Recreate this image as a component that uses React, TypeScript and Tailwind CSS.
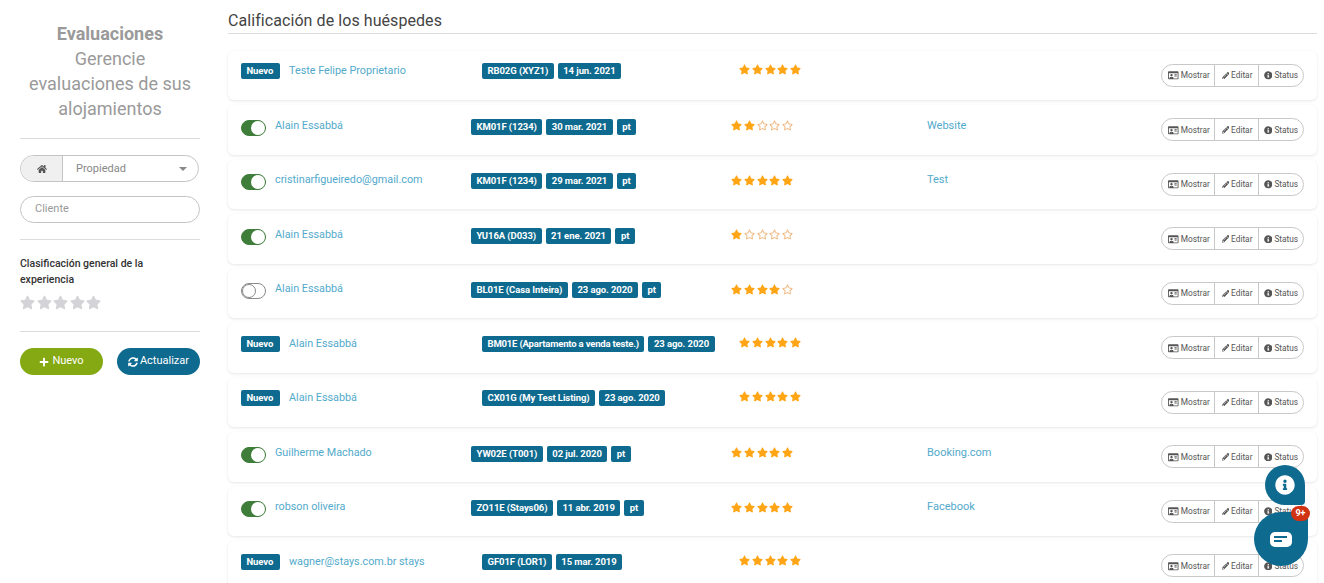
import React from "react";
import { FaHome, FaPlus, FaSyncAlt, FaStar, FaRegStar, FaRegIdCard, FaPencilAlt, FaInfoCircle } from "react-icons/fa";

type Row = { kind: "nuevo" | "on" | "off"; name: string; badges: string[]; stars: number; source?: string };
const rows: Row[] = [
  { kind: "nuevo", name: "Teste Felipe Proprietario", badges: ["RB02G (XYZ1)", "14 jun. 2021"], stars: 5 },
  { kind: "on", name: "Alain Essabbá", badges: ["KM01F (1234)", "30 mar. 2021", "pt"], stars: 2, source: "Website" },
  { kind: "on", name: "cristinarfigueiredo@gmail.com", badges: ["KM01F (1234)", "29 mar. 2021", "pt"], stars: 5, source: "Test" },
  { kind: "on", name: "Alain Essabbá", badges: ["YU16A (D033)", "21 ene. 2021", "pt"], stars: 1 },
  { kind: "off", name: "Alain Essabbá", badges: ["BL01E (Casa Inteira)", "23 ago. 2020", "pt"], stars: 4 },
  { kind: "nuevo", name: "Alain Essabbá", badges: ["BM01E (Apartamento a venda teste.)", "23 ago. 2020"], stars: 5 },
  { kind: "nuevo", name: "Alain Essabbá", badges: ["CX01G (My Test Listing)", "23 ago. 2020"], stars: 5 },
  { kind: "on", name: "Guilherme Machado", badges: ["YW02E (T001)", "02 jul. 2020", "pt"], stars: 5, source: "Booking.com" },
  { kind: "on", name: "robson oliveira", badges: ["ZO11E (Stays06)", "11 abr. 2019", "pt"], stars: 5, source: "Facebook" },
  { kind: "nuevo", name: "wagner@stays.com.br stays", badges: ["GF01F (LOR1)", "15 mar. 2019"], stars: 5 },
];

function Badge({ children, tight }: { children: React.ReactNode; tight?: boolean }) {
  return <span className={`flex h-4 items-center rounded-[2px] bg-[#0f6a8f] px-[5.5px] text-[9.5px] font-bold whitespace-nowrap text-white ${tight ? "tracking-[-0.18px]" : "tracking-[-0.08px]"}`}>{children}</span>;
}

function Toggle({ on }: { on: boolean }) {
  return (
    <span className={`mt-[2px] flex h-4 w-[25px] shrink-0 items-center rounded-full border ${on ? "justify-end border-[#3f7d3a] bg-[#3f7d3a]" : "justify-start border-[#8a8a8a] bg-white"}`}>
      <span className={`h-[14px] w-[14px] rounded-full ${on ? "bg-white" : "border border-[#8a8a8a] bg-white"}`} />
    </span>
  );
}

function Stars({ n, lift }: { n: number; lift: boolean }) {
  return (
    <div className={`flex gap-[1.75px] text-[11px] text-[#ffa516] ${lift ? "mb-[3px]" : "mb-[2px]"}`}>
      {[0, 1, 2, 3, 4].map((i) => (i < n ? <FaStar key={i} /> : <FaRegStar key={i} className="text-[#efb57c]" />))}
    </div>
  );
}

function Actions() {
  return (
    <div className="flex h-[23px] items-center rounded-full border border-[#c8c8c8] bg-white text-[8.3px] text-[#555]">
      <span className="flex h-full w-[53px] items-center justify-center gap-[2px] border-r border-[#c8c8c8] pl-[2px]"><FaRegIdCard className="text-[10.5px]" />Mostrar</span>
      <span className="flex h-full w-[44px] items-center justify-center gap-[2px] border-r border-[#c8c8c8] pl-[1px]"><FaPencilAlt className="text-[7.5px]" />Editar</span>
      <span className="flex h-full w-[44px] items-center justify-center gap-[2px]"><FaInfoCircle className="text-[8.5px]" />Status</span>
    </div>
  );
}

function Card({ r }: { r: Row }) {
  const nuevo = r.kind === "nuevo";
  return (
    <div className="mb-[5px] flex h-[49.5px] items-center rounded-[6px] bg-white px-[13px] shadow-[0_1px_3px_rgba(0,0,0,0.1)]">
      <div className={`flex items-center ${nuevo ? "pb-[8px]" : "pb-[6px]"}`}>
        <div className={`flex shrink-0 items-center gap-[9px] ${nuevo ? "w-[241px]" : "w-[230px]"}`}>
          {nuevo ? <span className="w-[39px]"><Badge>Nuevo</Badge></span> : <Toggle on={r.kind === "on"} />}
          <span className={`text-[10.8px] whitespace-nowrap text-[#52aacb] ${nuevo ? "" : "mb-[2px]"}`}>{r.name}</span>
        </div>
        <div className={`flex shrink-0 gap-[4px] ${nuevo ? "w-[257px]" : "w-[260px]"}`}>
          {r.badges.map((b) => <Badge key={b} tight={b.length > 30}>{b}</Badge>)}
        </div>
        <div className={`shrink-0 ${nuevo ? "w-[188px]" : "w-[196px]"}`}><Stars n={r.stars} lift={nuevo} /></div>
        <span className="mb-[2px] text-[11px] text-[#52aacb]">{r.source}</span>
      </div>
      <div className="ml-auto"><Actions /></div>
    </div>
  );
}

export default function App() {
  return (
    <div className="relative flex h-[583px] w-[1324px] overflow-hidden bg-white font-['Roboto',sans-serif]">
      <aside className="w-[228px] shrink-0 pt-[21px] pr-[28px] pl-[20px]">
        <div className="px-[8px] text-center text-[18px] leading-[25px] text-[#9a9a9a]">
          <div className="font-bold">Evaluaciones</div>
          <div>Gerencie evaluaciones de sus alojamientos</div>
        </div>
        <div className="mt-[17px] border-t border-[#dcdcdc]" />
        <div className="mt-[16px] flex h-[27px] w-[179px] items-center overflow-hidden rounded-full border border-[#c4c4c4] text-[11px] text-[#888]">
          <span className="flex h-full w-[42px] items-center justify-center border-r border-[#c4c4c4] bg-[#f0f0f0] text-[10px] text-[#555]"><FaHome /></span>
          <span className="ml-[13px] pt-[1px]">Propiedad</span>
          <span className="mr-[11px] ml-auto h-0 w-0 border-x-[4px] border-t-[4px] border-x-transparent border-t-[#888]" />
        </div>
        <div className="mt-[14px] flex h-[27px] items-center rounded-full border border-[#c4c4c4] pl-[14px] text-[11px] text-[#999]">Cliente</div>
        <div className="mt-[16px] border-t border-[#dcdcdc]" />
        <div className="mt-[16px] w-[150px] text-[10.5px] leading-[16px] font-medium text-[#333]">Clasificación general de la experiencia</div>
        <div className="mt-[7px] flex gap-[1.5px] text-[15px] text-[#d4d4d8]">
          {[0, 1, 2, 3, 4].map((i) => <FaStar key={i} />)}
        </div>
        <div className="mt-[21px] border-t border-[#dcdcdc]" />
        <div className="mt-[16px] flex justify-between">
          <span className="flex h-[27px] w-[83px] items-center justify-center gap-[3px] rounded-full bg-[#84a913] text-[11px] text-white"><FaPlus className="text-[10px]" />Nuevo</span>
          <span className="flex h-[27px] w-[83px] items-center justify-center gap-[2px] rounded-full bg-[#0f6a8f] text-[11px] text-white"><FaSyncAlt className="text-[10px]" />Actualizar</span>
        </div>
      </aside>
      <main className="w-[1089px] shrink-0">
        <h1 className="flex h-[34px] items-end border-b border-[#dcdcdc] pb-[2px] text-[16px] leading-[20px] font-normal tracking-[0.07px] text-[#444]">Calificación de los huéspedes</h1>
        <div className="mt-[16.5px]">
          {rows.map((r, i) => <Card key={i} r={r} />)}
        </div>
      </main>
      <div className="absolute top-[465px] left-[1265px] flex h-[40px] w-[40px] items-center justify-center rounded-[50%_50%_10%_50%] bg-[#0f6a8f] text-[20px] text-white"><FaInfoCircle /></div>
      <div className="absolute top-[512px] left-[1254px] flex h-[54px] w-[54px] items-center justify-center rounded-[50%_10%_50%_50%] bg-[#0f6a8f]">
        <svg width="22" height="15" viewBox="0 0 22 15"><rect width="22" height="15" rx="5" fill="#fff" /><rect x="4" y="4" width="13" height="2" fill="#0f6a8f" /><rect x="4" y="8" width="8" height="2" fill="#0f6a8f" /></svg>
      </div>
      <div className="absolute top-[506px] left-[1291px] flex h-[15px] w-[19px] items-center justify-center rounded-full bg-[#d13212] text-[9px] font-bold text-white">9+</div>
    </div>
  );
}
